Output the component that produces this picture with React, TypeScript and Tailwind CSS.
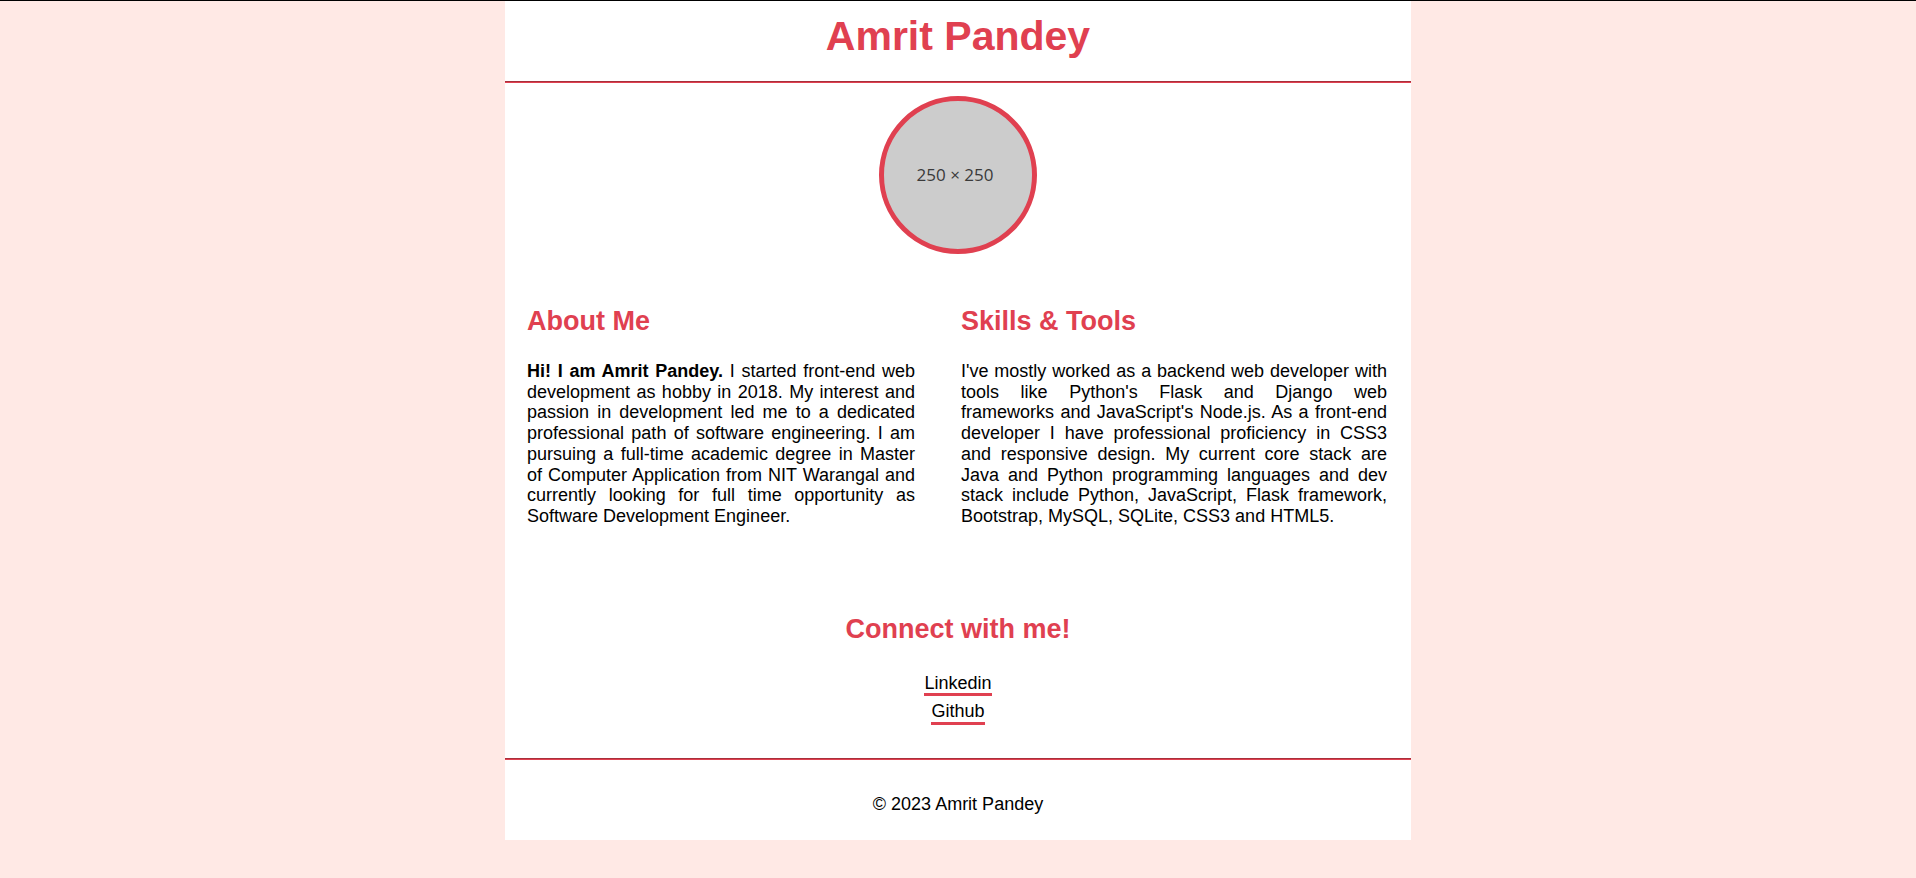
import React from "react";

const font = { fontFamily: '"Liberation Sans", Arial, sans-serif' };

function JustifiedLines({ lines }: { lines: React.ReactNode[] }) {
  return (
    <div className="mt-[24px] text-[18px] leading-[20.7px]">
      {lines.map((line, i) => (
        <div
          key={i}
          className={
            i < lines.length - 1
              ? "text-justify [text-align-last:justify] whitespace-nowrap"
              : "text-left whitespace-nowrap"
          }
        >
          {line}
        </div>
      ))}
    </div>
  );
}

export default function App() {
  const about: React.ReactNode[] = [
    <>
      <b>Hi! I am Amrit Pandey.</b> I started front-end web
    </>,
    "development as hobby in 2018. My interest and",
    "passion in development led me to a dedicated",
    "professional path of software engineering. I am",
    "pursuing a full-time academic degree in Master",
    "of Computer Application from NIT Warangal and",
    "currently looking for full time opportunity as",
    "Software Development Engineer.",
  ];
  const skills: React.ReactNode[] = [
    "I've mostly worked as a backend web developer with",
    "tools like Python's Flask and Django web",
    "frameworks and JavaScript's Node.js. As a front-end",
    "developer I have professional proficiency in CSS3",
    "and responsive design. My current core stack are",
    "Java and Python programming languages and dev",
    "stack include Python, JavaScript, Flask framework,",
    "Bootstrap, MySQL, SQLite, CSS3 and HTML5.",
  ];

  return (
    <div
      className="min-h-[878px] bg-[#ffe9e5] border-t border-black text-black"
      style={font}
    >
      <div className="w-[906px] mx-auto bg-white pb-[25px]">
        <header className="pt-[12px] pb-[21px] text-center">
          <h1 className="text-[41px] leading-[47px] font-bold text-[#e04050]">
            Amrit Pandey
          </h1>
        </header>
        <div className="border-t border-b border-t-[#a8303b] border-b-[#e04050]" />

        <main>
          <div className="flex justify-center pt-[13px]">
            <div className="w-[158px] h-[158px] rounded-full border-[5px] border-[#e04050] bg-[#cccccc] flex items-center justify-center pr-[6px]">
              <span
                className="text-[17px] text-[#3a3a3a] font-normal"
                style={{ fontFamily: '"Open Sans", sans-serif' }}
              >
                250 × 250
              </span>
            </div>
          </div>

          <div className="grid grid-cols-[388px_426px] gap-x-[46px] px-[22px] pt-[52px]">
            <section>
              <h2 className="text-[27px] leading-[31px] font-bold text-[#e04050]">
                About Me
              </h2>
              <JustifiedLines lines={about} />
            </section>
            <section>
              <h2 className="text-[27px] leading-[31px] font-bold text-[#e04050]">
                Skills &amp; Tools
              </h2>
              <JustifiedLines lines={skills} />
            </section>
          </div>

          <section className="pt-[87px] pb-[33px] text-center">
            <h2 className="text-[27px] leading-[31px] font-bold text-[#e04050]">
              Connect with me!
            </h2>
            <div className="mt-[28px] flex flex-col items-center gap-[5px] text-[18px]">
              <a
                href="#"
                className="inline-block leading-[20.7px] border-b-[3px] border-[#e04050] text-black"
              >
                Linkedin
              </a>
              <a
                href="#"
                className="inline-block leading-[20.7px] border-b-[3px] border-[#e04050] text-black"
              >
                Github
              </a>
            </div>
          </section>
        </main>

        <div className="border-t border-b border-t-[#a8303b] border-b-[#e04050]" />
        <footer className="pt-[34px] text-center text-[18px] leading-[20.7px]">
          © 2023 Amrit Pandey
        </footer>
      </div>
    </div>
  );
}
